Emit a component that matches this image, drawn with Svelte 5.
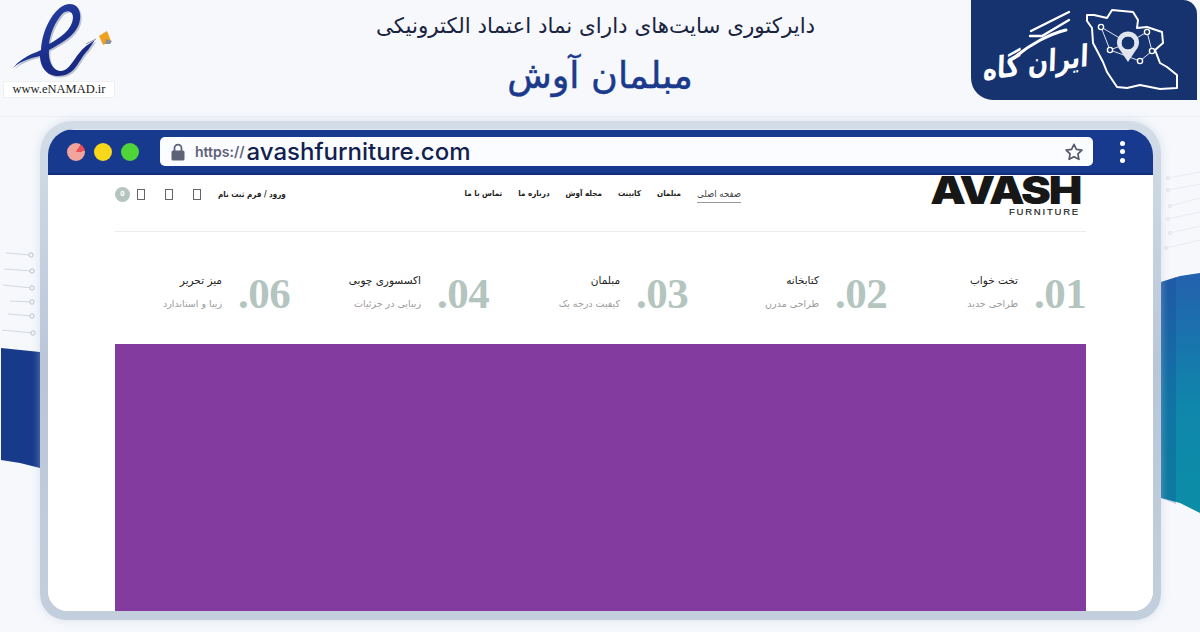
<script>
  const menu = [
    { label: 'صفحه اصلی', active: true },
    { label: 'مبلمان' },
    { label: 'کابینت' },
    { label: 'مجله آوش' },
    { label: 'درباره ما' },
    { label: 'تماس با ما' }
  ];
  const stats = [
    { n: '.01', t: 'تخت خواب', s: 'طراحی جدید' },
    { n: '.02', t: 'کتابخانه', s: 'طراحی مدرن' },
    { n: '.03', t: 'مبلمان', s: 'کیفیت درجه یک' },
    { n: '.04', t: 'اکسسوری چوبی', s: 'زیبایی در جزئیات' },
    { n: '.06', t: 'میز تحریر', s: 'زیبا و استاندارد' }
  ];
  const leftNet = [[6,253,31,255],[4,269,32,271],[3,285,32,288],[10,301,32,302],[8,314,32,316],[2,330,33,333]];
  const rightNet = [[1168,178,1200,172],[1168,190,1200,184],[1170,206,1200,198],[1168,219,1200,212],[1170,233,1200,226],[1166,248,1200,240]];
</script>

<div class="page">
  <svg class="decor" viewBox="0 0 1200 632" aria-hidden="true">
    <defs>
      <linearGradient id="rb" x1="0" y1="0" x2="0" y2="1">
        <stop offset="0" stop-color="#2461ae" />
        <stop offset="0.55" stop-color="#0f86ab" />
        <stop offset="1" stop-color="#0c8ea6" />
      </linearGradient>
    </defs>
    <polygon points="1161,282 1180,276 1200,273 1200,513 1180,503 1161,498" fill="url(#rb)" />
    <polygon points="1161,282 1176,277 1176,504 1161,498" fill="#14408f" opacity="0.25" />
    <polygon points="1,348 40,352 40,468 20,463 1,460" fill="#173a8b" />
    {#each leftNet as l}
      <line x1={l[0]} y1={l[1]} x2={l[2]} y2={l[3]} stroke="#d3d8e0" />
      <circle cx={l[2]} cy={l[3]} r="2.2" fill="#f6f8fc" stroke="#bcc3cd" />
    {/each}
    {#each rightNet as l}
      <line x1={l[0]} y1={l[1]} x2={l[2]} y2={l[3]} stroke="#e8ebf0" />
      <circle cx={l[0]} cy={l[1]} r="1.5" fill="#f6f8fc" stroke="#dfe3e9" />
    {/each}
  </svg>

  <header class="top">
    <div class="enamad">
      <svg class="e-mark" width="116" height="80" viewBox="0 0 116 80" aria-hidden="true">
        <defs>
          <linearGradient id="eg" x1="0" y1="0" x2="1" y2="1">
            <stop offset="0" stop-color="#2f4bb0" />
            <stop offset="0.55" stop-color="#1a2f8c" />
            <stop offset="1" stop-color="#16247a" />
          </linearGradient>
        </defs>
        <path d="M13 68C24 55 36 53 41 50C42 28 56 4 70 4C80 4 82 16 79 24C75 36 60 44 49 50C48 60 52 70 60 71C70 72 74 56 86 46L95 40L88 50C78 60 76 76 58 76C46 76 40 66 40 56C32 58 22 60 13 68ZM49 44C60 38 72 30 73 18C73 10 66 10 62 14C55 22 50 34 49 44Z" fill="#bcc2d0" fill-rule="evenodd" transform="translate(1.5 1.5)" />
        <path d="M13 68C24 55 36 53 41 50C42 28 56 4 70 4C80 4 82 16 79 24C75 36 60 44 49 50C48 60 52 70 60 71C70 72 74 56 86 46L95 40L88 50C78 60 76 76 58 76C46 76 40 66 40 56C32 58 22 60 13 68ZM49 44C60 38 72 30 73 18C73 10 66 10 62 14C55 22 50 34 49 44Z" fill="url(#eg)" fill-rule="evenodd" />
        <path d="M86 44L96 39" stroke="#8d93a6" stroke-width="1" />
        <polygon points="99,36 107,31 111,41 103,45" fill="#f0a21e" />
        <polygon points="106,39 112,41 110,44 105,44" fill="#8c8f96" />
      </svg>
      <div class="e-url">www.eNAMAD.ir</div>
    </div>

    <div class="heading">
      <h2>دایرکتوری سایت‌های دارای نماد اعتماد الکترونیکی</h2>
      <h1>مبلمان آوش</h1>
    </div>

    <div class="badge-wrap">
      <div class="badge">
        <svg class="map" width="226" height="100" viewBox="971 0 226 100" aria-hidden="true">
          <path d="M1087 15L1094 15L1107 18L1112 10L1133 12L1138 20L1137 28L1147 27L1162 32L1163 43L1155 50L1160 63L1167 67L1177 75L1177 88L1160 89L1140 85L1127 88L1117 87L1107 72L1103 62L1093 43L1092 28L1087 21Z" fill="none" stroke="#fff" stroke-width="2" stroke-linejoin="round" />
          <path d="M1101 27L1128 43M1147 32L1128 43M1147 32L1152 51M1110 50L1101 27M1110 50L1140 61M1152 51L1140 61M1110 50L1128 43" stroke="#dfe5f0" stroke-width="1" fill="none" />
          <g fill="#16336f" stroke="#fff" stroke-width="1.4">
            <circle cx="1101" cy="27" r="2.6" />
            <circle cx="1147" cy="32" r="2.6" />
            <circle cx="1152" cy="51" r="2.6" />
            <circle cx="1110" cy="50" r="2.6" />
            <circle cx="1140" cy="61" r="2.6" />
          </g>
          <path d="M1128 62L1120 50A11 11 0 1 1 1136 50Z" fill="#dfe4ee" />
          <circle cx="1128" cy="43" r="7" fill="#16336f" stroke="#fff" />
          <path d="M1069 12L1031 31M1069 20L1042 36L1030 36" stroke="#fff" stroke-width="2.4" fill="none" stroke-linecap="round" />
          <path d="M1066 30C1050 34 1030 44 1014 58" stroke="#fff" stroke-width="3" fill="none" stroke-linecap="round" />
        </svg>
        <span class="brand">ایران گاه</span>
      </div>
    </div>
  </header>

  <section class="frame">
    <div class="window">
      <div class="chrome">
        <div class="lights">
          <span class="light red"></span>
          <span class="light yellow"></span>
          <span class="light green"></span>
        </div>
        <div class="address">
          <svg width="14" height="18" viewBox="0 0 14 18" aria-hidden="true">
            <path d="M3.5 8V5.2a3.5 3.5 0 0 1 7 0V8" fill="none" stroke="#5e6276" stroke-width="1.8" />
            <rect x="0.5" y="7.5" width="13" height="10" rx="1.6" fill="#5e6276" />
          </svg>
          <span class="proto">https://</span>
          <span class="domain">avashfurniture.com</span>
          <svg class="star" width="20" height="20" viewBox="0 0 24 24" aria-hidden="true">
            <path d="M12 2.8l2.9 6 6.6.9-4.8 4.6 1.2 6.5-5.9-3.2-5.9 3.2 1.2-6.5-4.8-4.6 6.6-.9z" fill="none" stroke="#55586a" stroke-width="2" stroke-linejoin="round" />
          </svg>
        </div>
        <div class="kebab"><i></i><i></i><i></i></div>
      </div>

      <div class="site">
        <div class="site-nav">
          <div class="logo">
            <span class="logo-main">AVASH</span>
            <span class="logo-sub">FURNITURE</span>
          </div>
          <nav class="menu">
            {#each menu as m}
              <span class="item" class:active={m.active}>{m.label}</span>
            {/each}
          </nav>
          <div class="tools">
            <span class="login">ورود / فرم ثبت نام</span>
            <span class="tofu"></span>
            <span class="tofu"></span>
            <span class="tofu last"></span>
            <span class="count">0</span>
          </div>
        </div>

        <div class="stats">
          {#each stats as s}
            <div class="stat">
              <div class="num">{s.n}</div>
              <div class="stat-text">
                <div class="stat-title">{s.t}</div>
                <div class="stat-sub">{s.s}</div>
              </div>
            </div>
          {/each}
        </div>

        <div class="hero"></div>
      </div>
    </div>
  </section>
</div>

<style>
  :global(body) { margin: 0; }
  .page {
    position: relative;
    width: 1200px;
    height: 632px;
    overflow: hidden;
    background: #f6f8fc;
    font-family: "DejaVu Sans", "Noto Sans", sans-serif;
  }
  .decor { position: absolute; inset: 0; width: 1200px; height: 632px; }

  .top {
    position: relative;
    display: grid;
    grid-template-columns: 229px 1fr 229px;
    height: 117px;
    border-bottom: 1px solid #eceff4;
    box-sizing: border-box;
  }
  .enamad { position: relative; height: 100px; }
  .e-mark { display: block; }
  .e-url {
    position: absolute;
    left: 3px;
    top: 81px;
    width: 112px;
    height: 17px;
    background: #fff;
    border: 1px solid #eef0f3;
    box-sizing: border-box;
    text-align: center;
    font: 12.5px/15px "Liberation Serif", serif;
    color: #222;
  }
  .heading { direction: rtl; text-align: center; }
  .heading h2 {
    margin: 13px 9px 0 0;
    font-size: 21.4px;
    line-height: 26px;
    font-weight: 400;
    color: #1a2340;
    white-space: nowrap;
  }
  .heading h1 {
    margin: 11px 0 0;
    font-size: 36.5px;
    line-height: 52px;
    font-weight: 400;
    color: #1b3a8c;
    -webkit-text-stroke: 0.5px #1b3a8c;
  }
  .badge-wrap { display: flex; justify-content: flex-end; padding-right: 3px; }
  .badge {
    position: relative;
    width: 226px;
    height: 100px;
    background: #16336f;
    border-radius: 0 14px 0 22px;
    overflow: hidden;
  }
  .map { position: absolute; inset: 0; }
  .brand {
    position: absolute;
    left: 12px;
    top: 44px;
    width: 106px;
    direction: rtl;
    text-align: center;
    font-size: 24px;
    line-height: 38px;
    font-weight: 700;
    color: #fff;
    transform: rotate(-8deg) skewX(-10deg) scaleY(1.25);
    white-space: nowrap;
  }

  .frame {
    margin: 4px 39px 0 40px;
    height: 499px;
    padding: 8px;
    box-sizing: border-box;
    position: relative;
    background: linear-gradient(180deg, #d3dde8 0%, #b9c6d8 50%, #c4cfdd 100%);
    border-radius: 32px 32px 26px 26px;
    box-shadow: 0 0 8px rgba(190, 203, 220, 0.5);
  }
  .window {
    height: 482px;
    display: flex;
    flex-direction: column;
    border-radius: 26px 26px 20px 20px;
    overflow: hidden;
    background: #fff;
  }
  .chrome {
    flex: none;
    height: 46px;
    box-sizing: border-box;
    background: #173a8f;
    border-top: 1px solid #e1e8f2;
    border-bottom: 2px solid #142f7a;
    display: flex;
    align-items: center;
    padding: 0 28px 0 19px;
  }
  .lights { display: flex; gap: 9px; margin-right: 21px; }
  .light { width: 18px; height: 18px; border-radius: 50%; }
  .red { background: conic-gradient(from 30deg, #ee4e55 0 55deg, #f2a59c 55deg); }
  .yellow { background: #f7d81b; }
  .green { background: #4fd43a; }
  .address {
    flex: 1;
    height: 29px;
    background: #fbfcff;
    border-radius: 5px;
    display: flex;
    align-items: center;
    padding: 0 9px 0 11px;
  }
  .proto {
    margin-left: 10px;
    font: 600 14px/1 "Inter", "Open Sans", sans-serif;
    color: #5e6276;
  }
  .domain {
    margin-left: 2px;
    font: 500 24px/1 "Inter", "Open Sans", sans-serif;
    color: #121f4f;
  }
  .star { margin-left: auto; }
  .kebab {
    display: flex;
    flex-direction: column;
    gap: 3.5px;
    width: 5px;
    margin-left: 27px;
  }
  .kebab i { width: 5px; height: 5px; border-radius: 50%; background: #fff; }

  .site {
    flex: 1;
    min-height: 0;
    padding: 0 67px;
    direction: rtl;
    display: flex;
    flex-direction: column;
    background: #fff;
  }
  .site-nav {
    flex: none;
    height: 57px;
    box-sizing: border-box;
    border-bottom: 1px solid #e9ebee;
    display: flex;
    align-items: flex-start;
  }
  .logo {
    width: 150px;
    display: flex;
    flex-direction: column;
    direction: ltr;
    margin-right: 6px;
  }
  .logo-main {
    width: 150px;
    height: 31px;
    margin-top: -1px;
    font: 900 39px/31px "Inter", "Liberation Sans", sans-serif;
    color: #171717;
    letter-spacing: -2px;
    text-align: right;
    white-space: nowrap;
    transform: scaleX(1.15);
    transform-origin: right center;
  }
  .logo-sub {
    width: 150px;
    margin-top: 2px;
    font: 400 9.5px/10px "Liberation Sans", sans-serif;
    letter-spacing: 1.8px;
    -webkit-text-stroke: 0.2px #222;
    color: #222;
    text-align: right;
  }
  .menu {
    display: flex;
    gap: 16px;
    margin-right: 189px;
    padding-top: 12px;
    font-family: "DejaVu Sans Condensed", "DejaVu Sans", sans-serif;
    font-size: 8px;
    font-weight: 700;
    color: #222;
    white-space: nowrap;
  }
  .item { height: 15px; line-height: 13px; }
  .item.active {
    color: #444;
    font-size: 9.5px;
    font-weight: 400;
    border-bottom: 1px solid #999;
  }
  .tools {
    margin-right: auto;
    padding-top: 12px;
    display: flex;
    align-items: center;
    height: 15px;
    font-family: "DejaVu Sans Condensed", "DejaVu Sans", sans-serif;
    font-size: 8px;
    font-weight: 700;
    color: #222;
    white-space: nowrap;
  }
  .login { margin-left: 17px; }
  .tofu {
    width: 8px;
    height: 11px;
    border: 1px solid #666;
    border-width: 1px 1px 1.5px;
    margin-left: 20px;
    box-sizing: border-box;
  }
  .tofu.last { margin-left: 7px; }
  .count {
    width: 15px;
    height: 15px;
    line-height: 15px;
    text-align: center;
    border-radius: 50%;
    background: #b4c5c0;
    color: #fff;
    font-size: 7px;
  }

  .stats {
    flex: none;
    height: 112px;
    display: flex;
    box-sizing: border-box;
    padding-top: 35px;
  }
  .stat { flex: none; width: 199px; display: flex; align-items: flex-start; }
  .stat:last-child { width: 175px; }
  .num {
    width: 52px;
    direction: ltr;
    text-align: right;
    font: 700 43px/54px "Liberation Serif", serif;
    color: #b4c5c0;
    letter-spacing: -0.5px;
    white-space: nowrap;
  }
  .stat-text { margin-right: 16px; padding-top: 3px; white-space: nowrap; }
  .stat-title { font-size: 10.5px; line-height: 20px; color: #222; }
  .stat-sub { font-size: 9.5px; line-height: 14px; margin-top: 7px; color: #9a9a9a; }

  .hero { flex: 1; background: #843b9f; }
</style>
